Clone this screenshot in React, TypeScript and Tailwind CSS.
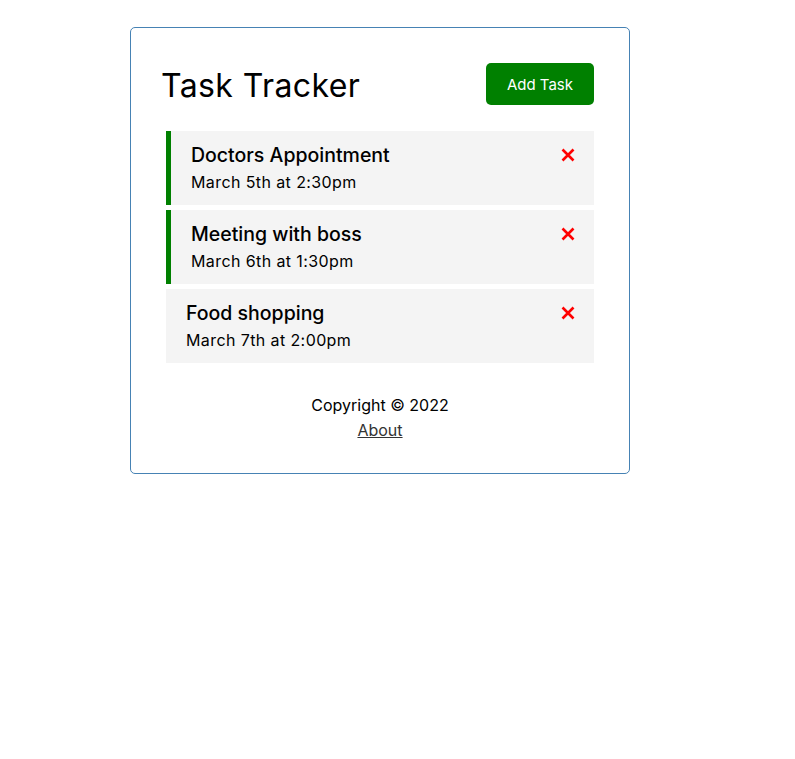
import React from "react";

const tasks = [
  { id: 1, text: "Doctors Appointment", day: "March 5th at 2:30pm", reminder: true },
  { id: 2, text: "Meeting with boss", day: "March 6th at 1:30pm", reminder: true },
  { id: 3, text: "Food shopping", day: "March 7th at 2:00pm", reminder: false },
];

function CloseIcon() {
  return (
    <svg width="14" height="14" viewBox="0 0 14 14" className="mr-[-1px]">
      <path d="M1.5 1.5 L12.5 12.5 M12.5 1.5 L1.5 12.5" stroke="#ff0000" strokeWidth="2.6" strokeLinecap="butt" fill="none" />
    </svg>
  );
}

export default function App() {
  return (
    <div className="min-h-screen bg-white text-black font-['Inter',sans-serif]">
      <div className="ml-[130px] mt-[27px] w-[500px] rounded-[5px] border border-[#4682b4] p-[30px]">
        <header className="mb-[20px] flex items-center justify-between">
          <h1 className="mt-[3px] text-[32px] font-normal leading-[48px] tracking-[0.4px]">Task Tracker</h1>
          <button className="m-[5px] rounded-[5px] bg-[#008000] px-[21px] pb-[9px] pt-[11px] text-[15px] leading-[22px] text-white">
            Add Task
          </button>
        </header>
        <div className="flex flex-col gap-[5px] px-[5px] pt-[1px]">
          {tasks.map((t) => (
            <div
              key={t.id}
              className={`h-[74px] bg-[#f4f4f4] px-[20px] pt-[10px] ${t.reminder ? "border-l-[5px] border-[#008000]" : ""}`}
            >
              <h3 className="flex h-[28px] items-center justify-between text-[19.5px] font-medium leading-[28px]">
                {t.text}
                <CloseIcon />
              </h3>
              <p className="pt-[1px] text-[16px] leading-[24px] tracking-[0.4px]">{t.day}</p>
            </div>
          ))}
        </div>
        <footer className="mt-[30px] text-center text-[16px] leading-[25px]">
          <p>Copyright © 2022</p>
          <a href="#" className="text-[#333] underline">About</a>
        </footer>
      </div>
    </div>
  );
}
